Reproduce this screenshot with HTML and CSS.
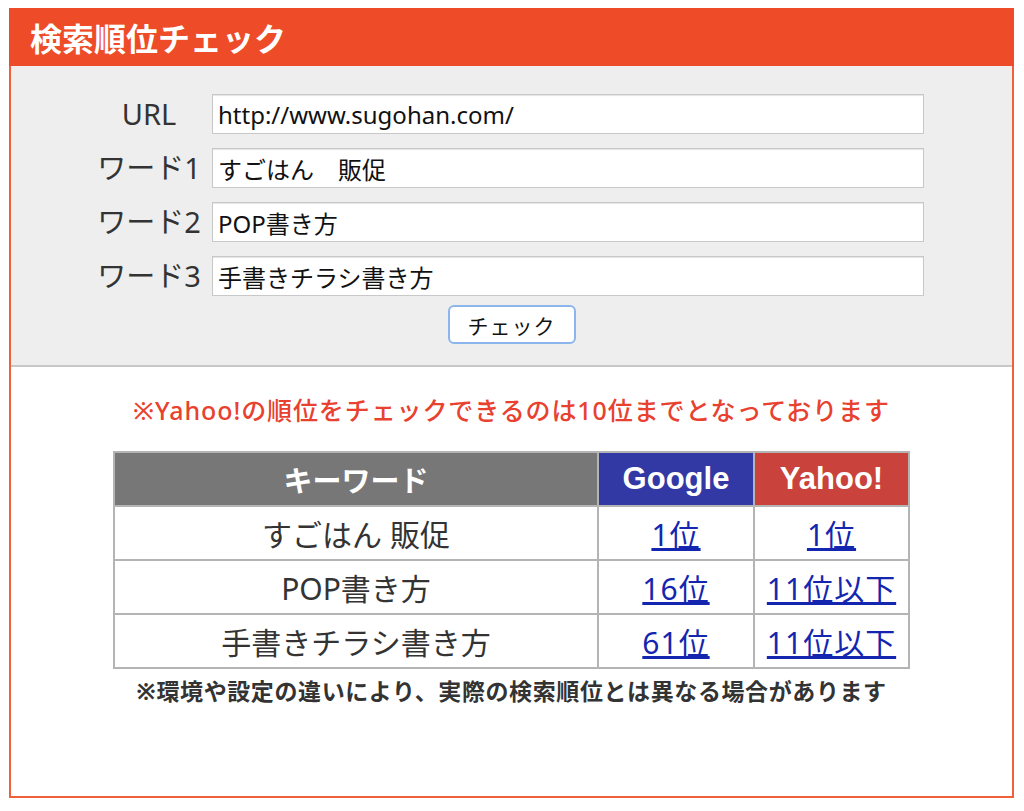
FILE: index.html
```html
<!DOCTYPE html>
<html lang="ja">
  <head>
    <meta charset="UTF-8" />
    <meta name="viewport" content="width=device-width, initial-scale=1.0" />
    <title>検索順位チェック</title>
    <link rel="stylesheet" href="styles.css">
  </head>

  <body>
    <div class="rank-box">
      <h1 class="rank-title">検索順位チェック</h1>

      <form class="rank-form">
        <div class="form-grid">
          <label class="form-label" for="url">URL</label>
          <input class="form-input" id="url" type="text" value="http://www.sugohan.com/">
          <label class="form-label" for="word1">ワード1</label>
          <input class="form-input" id="word1" type="text" value="すごはん　販促">
          <label class="form-label" for="word2">ワード2</label>
          <input class="form-input" id="word2" type="text" value="POP書き方">
          <label class="form-label" for="word3">ワード3</label>
          <input class="form-input" id="word3" type="text" value="手書きチラシ書き方">
        </div>
        <div class="form-actions">
          <button type="button" class="check-btn">チェック</button>
        </div>
      </form>

      <div class="result">
        <p class="result-note">※Yahoo!の順位をチェックできるのは10位までとなっております</p>

        <table class="result-table">
          <thead>
            <tr>
              <th class="col-word">キーワード</th>
              <th class="col-google">Google</th>
              <th class="col-yahoo">Yahoo!</th>
            </tr>
          </thead>
          <tbody>
            <tr>
              <td>すごはん 販促</td>
              <td><a href="#">1位</a></td>
              <td><a href="#">1位</a></td>
            </tr>
            <tr>
              <td>POP書き方</td>
              <td><a href="#">16位</a></td>
              <td><a href="#">11位以下</a></td>
            </tr>
            <tr>
              <td>手書きチラシ書き方</td>
              <td><a href="#">61位</a></td>
              <td><a href="#">11位以下</a></td>
            </tr>
          </tbody>
        </table>

        <p class="result-caution">※環境や設定の違いにより、実際の検索順位とは異なる場合があります</p>
      </div>
    </div>
  </body>
</html>
```

FILE: styles.css
```css
body {
  margin: 0;
  padding: 8px 10px 0 9px;
  background-color: #fff;
  font-family: "Noto Sans", "Noto Sans CJK JP", sans-serif;
  color: #333;
}

.rank-box {
  border: 2px solid #f0603a;
  border-top: none;
}

.rank-title {
  margin: 0 -2px;
  padding: 0 0 0 21px;
  height: 58px;
  line-height: 58px;
  background-color: #ee4b28;
  color: #fff;
  font-family: "Noto Sans CJK JP", sans-serif;
  font-size: 32px;
  font-weight: 700;
}

.rank-form {
  background-color: #eee;
  border-bottom: 2px solid #c8c8c8;
  padding: 28px 0 21px;
}

.form-grid {
  display: grid;
  grid-template-columns: 104px 712px;
  column-gap: 11px;
  row-gap: 14px;
  padding-left: 86px;
}

.form-label {
  text-align: center;
  font-size: 29px;
  font-weight: 400;
  line-height: 40px;
  color: #333;
}

.form-input {
  box-sizing: border-box;
  height: 40px;
  margin: 0;
  padding: 0 5px;
  border: 1px solid #c8c8c8;
  box-shadow: inset 0 1px 1px #e4e4e4;
  background-color: #fff;
  font-family: "Noto Sans", "Noto Sans CJK JP", sans-serif;
  font-size: 24px;
  color: #111;
}

.form-actions {
  display: flex;
  justify-content: center;
  margin-top: 9px;
}

.check-btn {
  box-sizing: border-box;
  width: 128px;
  height: 39px;
  background-color: #fff;
  border: 2px solid #8cb5ec;
  border-radius: 6px;
  font-family: "Noto Sans CJK JP", sans-serif;
  font-size: 21px;
  letter-spacing: 1px;
  color: #111;
}

.result {
  padding: 26px 0 90px;
  text-align: center;
}

.result-note {
  margin: 0 0 24px;
  font-size: 25px;
  font-weight: 500;
  letter-spacing: 0.9px;
  line-height: 34px;
  color: #e8412f;
}

.result-table {
  margin: 0 auto;
  width: 797px;
  border-collapse: collapse;
  border: 2px solid #b4b4b4;
}

.result-table th,
.result-table td {
  border: 2px solid #b4b4b4;
  height: 52px;
  padding: 0;
  text-align: center;
  font-size: 30px;
}

.result-table th {
  color: #fff;
  font-weight: 700;
  font-size: 29px;
}

.col-word {
  width: 482px;
  background-color: #777;
}

.col-google {
  width: 154px;
  background-color: #3238a4;
  font-family: "Liberation Sans", sans-serif;
}

.result-table .col-google,
.result-table .col-yahoo {
  font-size: 31px;
}

.col-yahoo {
  background-color: #c9423b;
  font-family: "Liberation Sans", sans-serif;
}

.result-table a {
  color: #1426b0;
  text-decoration: underline;
  letter-spacing: 1px;
}

.result-caution {
  margin: 7px 0 0;
  font-size: 23px;
  font-weight: 700;
  letter-spacing: 0.6px;
  line-height: 30px;
  color: #333;
}
```
